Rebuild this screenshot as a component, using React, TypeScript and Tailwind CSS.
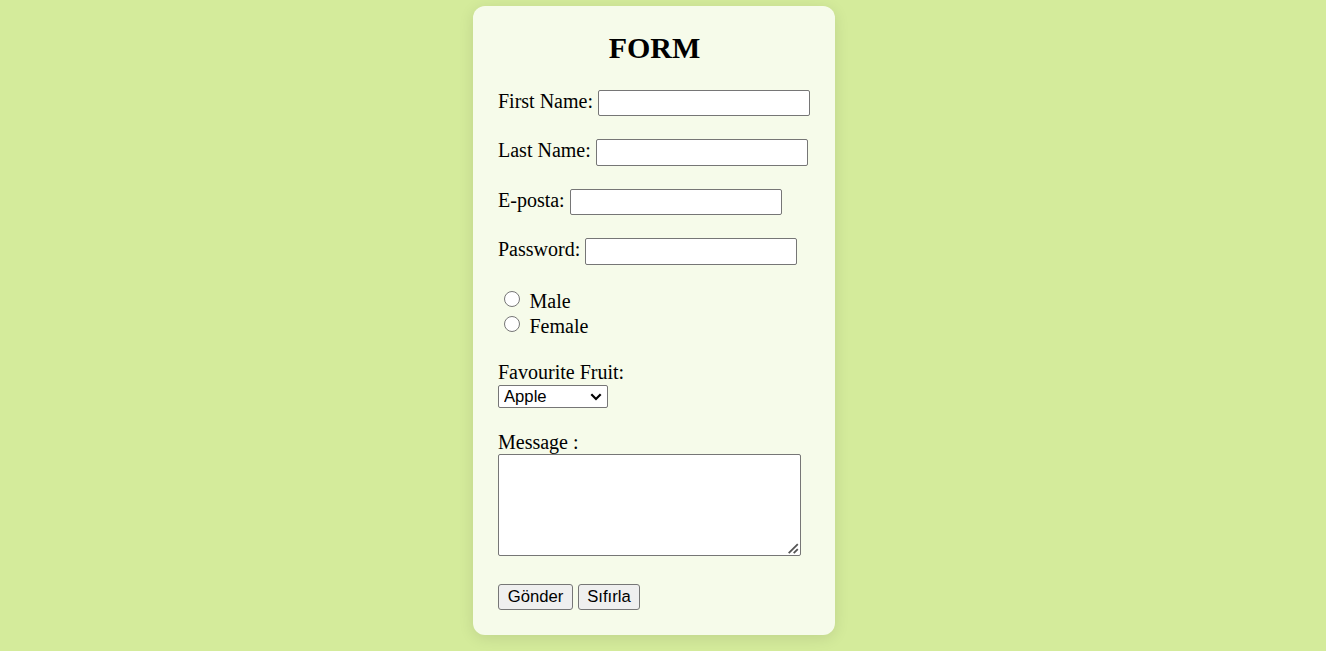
import type { ReactNode } from "react";

const control =
  "block shrink-0 rounded-[2px] border border-[#767676] bg-white outline-none font-['Liberation_Sans',Arial,sans-serif] text-[16.67px] text-black";

function Field({ label, type, className }: { label: string; type: string; className: string }) {
  return (
    <label className={`flex items-start gap-[5px] whitespace-nowrap ${className}`}>
      <span>{label}</span>
      <input type={type} className={`${control} h-full w-[212px] px-1`} />
    </label>
  );
}

function Radio({ children }: { children: ReactNode }) {
  return (
    <label className="flex h-[25px] items-start pl-[6px]">
      <input
        type="radio"
        name="gender"
        className="mt-[1px] mr-[9.5px] size-4 shrink-0 appearance-none rounded-full border border-[#767676] bg-white checked:border-4 checked:border-[#0075ff]"
      />
      <span>{children}</span>
    </label>
  );
}

const button =
  "h-[26px] rounded-[3px] border border-[#767676] bg-[#efefef] text-center font-['Liberation_Sans',Arial,sans-serif] text-[16.67px] leading-[22px] text-black";

export default function App() {
  return (
    <main className="flex h-screen justify-center overflow-hidden bg-[#d4eb9b] pt-[6px] pr-[18px] font-['Liberation_Serif','Times_New_Roman',serif] text-[20px] leading-[23px] text-black">
      <form
        className="h-[629px] w-[362px] rounded-[12px] bg-[#f6fbea] px-[25px] pt-[25px] shadow-[0_3px_15px_rgba(0,0,0,0.1)]"
        onSubmit={(e) => e.preventDefault()}
      >
        <h1 className="pl-px text-center text-[30px] leading-[34px] font-bold">FORM</h1>
        <div className="mt-[25px] flex flex-col">
          <Field label="First Name:" type="text" className="h-[26px]" />
          <Field label="Last Name:" type="text" className="mt-[23px] h-[27px]" />
          <Field label="E-posta:" type="email" className="mt-[23px] h-[26px]" />
          <Field label="Password:" type="password" className="mt-[23px] h-[27px]" />
        </div>
        <div className="mt-[25px]">
          <Radio>Male</Radio>
          <Radio>Female</Radio>
        </div>
        <label className="mt-[21px] block">
          Favourite Fruit:
          <span className="relative mt-px block w-[110px]">
            <select className={`${control} h-[23px] w-full appearance-none pl-[5px] leading-[20px]`}>
              <option>Apple</option>
              <option>Banana</option>
              <option>Orange</option>
            </select>
            <svg
              className="pointer-events-none absolute top-[8px] right-[6px]"
              width="12"
              height="8"
              viewBox="0 0 12 8"
              fill="none"
              stroke="black"
              strokeWidth="2.2"
            >
              <path d="M1.3 1.3 6 6 10.7 1.3" />
            </svg>
          </span>
        </label>
        <label className="mt-[23px] block">
          Message :
          <span className="relative block w-[303px]">
            <textarea className={`${control} h-[102px] w-full resize-none p-[3px]`} />
            <svg
              className="pointer-events-none absolute right-[2px] bottom-[2px]"
              width="11"
              height="11"
              viewBox="0 0 11 11"
              fill="none"
              stroke="#555"
              strokeWidth="1.8"
            >
              <path d="M.7 10.2 9.8 1.1M5.7 10.2 9.8 6.1" />
            </svg>
          </span>
        </label>
        <div className="mt-[28px] flex gap-[5px]">
          <button type="submit" className={`${button} w-[75px]`}>Gönder</button>
          <button type="reset" className={`${button} w-[62px]`}>Sıfırla</button>
        </div>
      </form>
    </main>
  );
}
